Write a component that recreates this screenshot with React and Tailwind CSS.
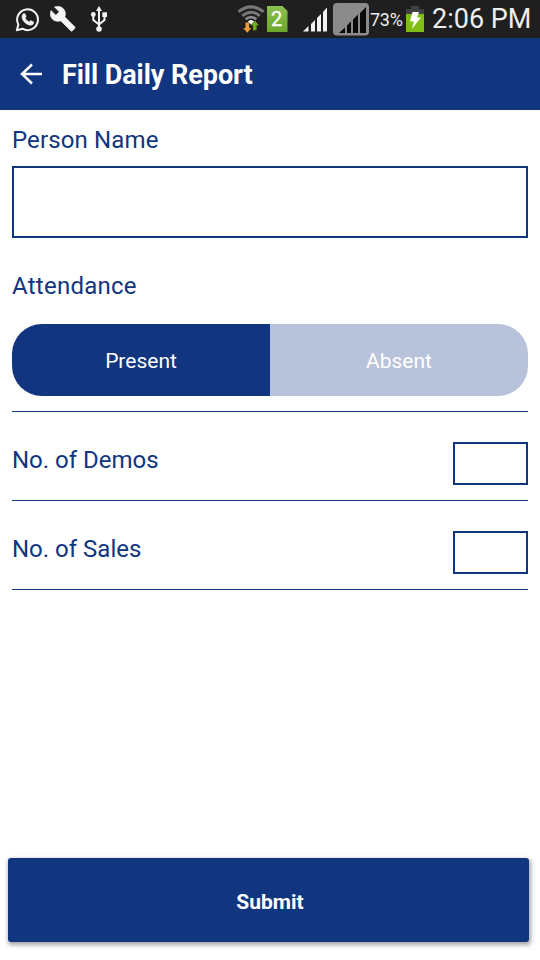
import React from "react";

const WhatsappIcon = () => (
  <svg className="ml-[15px] h-[25px] w-[25px]" viewBox="0 0 25 25" fill="none">
    <path
      d="M1.8 23.2 3.4 17.6A10.4 10.4 0 1 1 7.4 21.7Z"
      stroke="#f2f2f2"
      strokeWidth="2"
      strokeLinejoin="round"
    />
    <path
      d="M8.6 6.6c.5-.4 1.100-.2 1.400.3l1 2.200c.2.4 0 .8-.9 1.800.9 1.900 2.300 3.200 4.200 4 .9-1.100 1.200-1.400 1.700-1.200l2.200 1.100c.6.3.6.8.4 1.400-.7 1.700-2.600 2.300-4.400 1.800-4-1.200-7.200-4.600-7.200-8.200 0-1.300.7-2.500 1.600-3.200Z"
      fill="#f2f2f2"
      stroke="#f2f2f2"
      strokeWidth="0.6"
    />
  </svg>
);

const WrenchIcon = () => (
  <svg className="ml-[10px] h-[26px] w-[26px]" viewBox="0 0 26 26" fill="#f5f5f5">
    <path
      d="M24.8 20.8 14.9 10.9C16 8.1 15.4 4.7 13.2 2.5 10.8.2 7.3-.3 4.400.9L9.200 5.800 5.900 9.200 1 4.400C-.4 7.200.2 10.800 2.500 13.200 4.700 15.300 8 15.900 10.800 14.900L20.800 24.900C21.200 25.300 21.900 25.300 22.300 24.900L24.800 22.400C25.300 22 25.300 21.200 24.800 20.800Z"
      stroke="#f5f5f5"
      strokeWidth="0.5"
    />
  </svg>
);

const UsbIcon = () => (
  <svg className="ml-[14px] h-[26px] w-[18px]" viewBox="0 0 18 26" fill="none">
    <path d="M9 4v19M3.3 9v5L9 18.5M14.5 9v5L9 18.5" stroke="#f2f2f2" strokeWidth="2" />
    <path d="M9 0 12 5H6Z" fill="#f2f2f2" />
    <circle cx="3.3" cy="8.5" r="2.4" fill="#f2f2f2" />
    <path d="M12.3 6.3h4.700v4.700h-4.700Z" fill="#f2f2f2" />
    <circle cx="9" cy="23" r="2.8" fill="#f2f2f2" />
  </svg>
);

const WifiIcon = () => (
  <svg className="ml-[129px] h-[29px] w-[28px]" viewBox="0 0 28 29" fill="none">
    <path d="M1.5 6.8Q14-3 26.5 6.8" stroke="#777" strokeWidth="3.2" />
    <path d="M5.3 10.8Q14 3.6 22.7 10.8" stroke="#777" strokeWidth="3" />
    <path d="M8.6 14.3Q14 9.8 19.4 14.3" stroke="#8a8a8a" strokeWidth="2.7" />
    <path d="M10.8 16.6Q14 13.4 17.2 16.6L14 19.5Z" fill="#fff" />
    <path d="M8.5 17.6h3.600v5.400h2.300l-4.100 4.800-4.100-4.800h2.300Z" fill="#f29a36" />
    <path d="m17.8 15.5 4.200 4.800h-2.400v5h-3.600v-5h-2.400Z" fill="#6cab1e" />
  </svg>
);

const SimIcon = () => (
  <svg className="ml-[2px] h-[26px] w-[21px]" viewBox="0 0 21 26">
    <defs>
      <linearGradient id="sim" x1="0" y1="0" x2="0" y2="1">
        <stop offset="0" stopColor="#8bc052" />
        <stop offset="1" stopColor="#6ca82a" />
      </linearGradient>
    </defs>
    <path d="M0 0h15.500L20.500 5v21H0Z" fill="url(#sim)" />
    <text
      x="9.5"
      y="20"
      fill="#fff"
      fontSize="20"
      textAnchor="middle"
      fontFamily="Roboto, sans-serif"
      stroke="#fff"
      strokeWidth="0.3"
    >
      2
    </text>
  </svg>
);

const SignalIcon = () => (
  <svg className="ml-[15px] h-[25px] w-[25px]" viewBox="0 0 25 25" fill="#f2f2f2">
    <path d="M0 24.500 5.500 19v5.500ZM8 17l4-4v11.500H8ZM14 11l4-4v17.500h-4ZM20 5l4-4.500v24h-4Z" />
  </svg>
);

const SecondSignalIcon = () => (
  <svg className="ml-[5px] h-[33px] w-[36px]" viewBox="0 0 36 33">
    <rect x="0" y="0" width="36" height="32.5" rx="4" fill="#8b8b8b" />
    <path
      d="M6 30 12 24.500V30ZM14 22.500l4-4V30h-4ZM20 16.500l5-5V30H20ZM27 10 33 4v26H27Z"
      fill="#0a0a0a"
    />
  </svg>
);

const BatteryIcon = () => (
  <svg className="ml-[3px] h-[26px] w-[18px]" viewBox="0 0 18 26">
    <path d="M5 0h8v3h5v6H0V3h5Z" fill="#414141" />
    <path d="M0 8h18v18H0Z" fill="#82bd16" />
    <path d="M6.5 6h6.500L11 11.500h4L5.800 23 8 15.500H4Z" fill="#fff" />
  </svg>
);

const StatusBar = () => (
  <div className="flex h-[38px] items-center bg-[#1f1f1f] text-[#eee]">
    <WhatsappIcon />
    <WrenchIcon />
    <UsbIcon />
    <WifiIcon />
    <SimIcon />
    <SignalIcon />
    <SecondSignalIcon />
    <span className="ml-px w-[33px] whitespace-nowrap text-[18px] tracking-[-0.3px]">73%</span>
    <BatteryIcon />
    <span className="ml-[8px] whitespace-nowrap text-[27px] leading-[38px]">2:06 PM</span>
  </div>
);

const CountRow = ({ label }) => (
  <div className="flex h-[89px] items-center justify-between border-b border-[#11357f] pt-[15px]">
    <label className="pb-2 text-[24px] leading-7">{label}</label>
    <input
      aria-label={label}
      className="h-[43px] w-[75px] border-2 border-[#11357f] outline-none"
    />
  </div>
);

const App = () => {
  return (
    <div className="flex h-[960px] w-[540px] flex-col overflow-hidden bg-white font-['Roboto',sans-serif] text-[#11357f]">
      <StatusBar />
      <header className="flex h-[72px] items-center bg-[#11357f] text-white">
        <svg className="ml-[20px] h-[22px] w-[22px]" viewBox="0 0 22 22" fill="none">
          <path d="M22 11H2M12 1.500 2 11l10 9.500" stroke="currentColor" strokeWidth="2.5" />
        </svg>
        <h1 className="ml-[20px] pt-[2px] text-[27px] font-bold tracking-[-0.05px]">
          Fill Daily Report
        </h1>
      </header>

      <main className="flex flex-1 flex-col px-3 pt-4">
        <label className="text-[24px] leading-7 tracking-[0.13px]">Person Name</label>
        <input
          aria-label="Person Name"
          className="mt-3 h-[72px] w-full border-2 border-[#11357f] px-3 outline-none"
        />
        <p className="mt-[34px] text-[24px] leading-7 tracking-[0.25px]">Attendance</p>
        <div className="mt-[24px] flex h-[72px] overflow-hidden rounded-[30px] text-[21px] text-white">
          <button className="flex-1 bg-[#11357f] pt-[3px]">Present</button>
          <button className="flex-1 bg-[#b8c2da] pt-[3px]">Absent</button>
        </div>
        <hr className="mt-[15px] border-t border-[#11357f]" />
        <CountRow label="No. of Demos" />
        <CountRow label="No. of Sales" />
      </main>

      <button className="mb-[18px] ml-2 h-[84px] w-[521px] rounded-[3px] bg-[#11357f] pt-[5px] pl-[3px] text-[21px] font-bold text-white shadow-[1px_2px_4px_1px_rgba(0,0,0,0.35)]">
        Submit
      </button>
    </div>
  );
};

export default App;
